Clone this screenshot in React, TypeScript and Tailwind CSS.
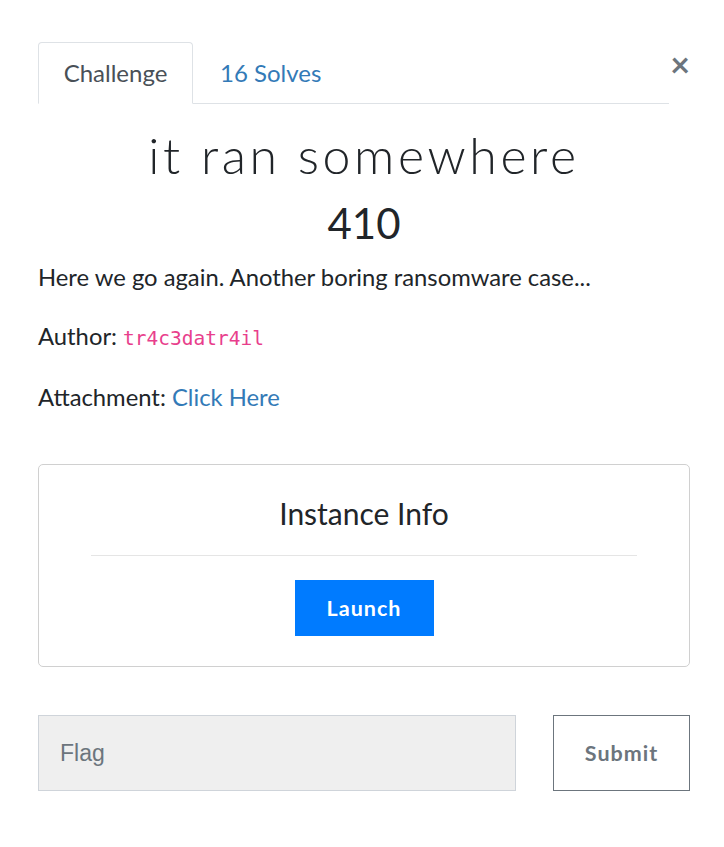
import React from 'react';

const lato = { fontFamily: 'Lato, "Open Sans", sans-serif' };

export default function App() {
    return (
        <div className="w-[724px] h-[847px] bg-white text-[#212529]" style={lato}>
            <div className="pt-[42px] pl-[38px] pr-[34px]">
                {/* tabs + close */}
                <div className="flex items-start">
                    <div className="flex w-[631px] border-b border-[#dee2e6]">
                        <div className="h-[62px] w-[155px] -mb-px border border-[#dee2e6] border-b-white rounded-t-[4px] bg-white flex items-center justify-center text-[24px] text-[#495057]">
                            Challenge
                        </div>
                        <div className="h-[61px] px-[27px] flex items-center text-[24px] text-[#337ab7]">16 Solves</div>
                    </div>
                    <button type="button" className="ml-auto mt-[5px] text-[34px] leading-none font-bold text-[#6c757d]">×</button>
                </div>

                <div className="w-[652px]">
                    <h2 className="mt-[22px] text-center text-[50px] leading-[58px] font-light tracking-[3.6px]">
                        it ran somewhere
                    </h2>
                    <h3 className="mt-[13px] text-center text-[42px] leading-[52px] font-normal">410</h3>

                    <div className="mt-[11px] text-[23.8px] leading-[34px]">
                        <p>Here we go again. Another boring ransomware case...</p>
                        <p className="mt-[24.5px]">
                            Author:{' '}
                            <code className="text-[19.5px] text-[#e83e8c]" style={{ fontFamily: '"DejaVu Sans Mono", monospace' }}>tr4c3datr4il</code>
                        </p>
                        <p className="mt-[24.5px]">
                            Attachment: <a className="text-[#337ab7]">Click Here</a>
                        </p>
                    </div>

                    {/* instance card */}
                    <div className="mt-[50px] h-[203px] border border-[#d0d0d0] rounded-[5px] flex flex-col items-center">
                        <h4 className="mt-[30px] text-[30px] leading-[36px]">Instance Info</h4>
                        <div className="mt-[24px] w-[546px] border-t border-[#e5e5e5]" />
                        <button type="button" className="mt-[24px] w-[139px] h-[56px] bg-[#007bff] text-white text-[21.5px] font-bold tracking-[1px]">
                            Launch
                        </button>
                    </div>

                    {/* flag */}
                    <div className="mt-[48px] flex justify-between">
                        <div className="w-[478px] h-[76px] bg-[#efefef] border border-[#cfd4da] flex items-center pl-[21px] text-[23px] text-[#6c757d]" style={{ fontFamily: '"Liberation Sans", Arial, sans-serif' }}>
                            Flag
                        </div>
                        <button type="button" className="w-[137px] h-[76px] border border-[#6c757d] bg-white text-[21.5px] font-bold tracking-[1px] text-[#6c757d]">
                            Submit
                        </button>
                    </div>
                </div>
            </div>
        </div>
    );
}
